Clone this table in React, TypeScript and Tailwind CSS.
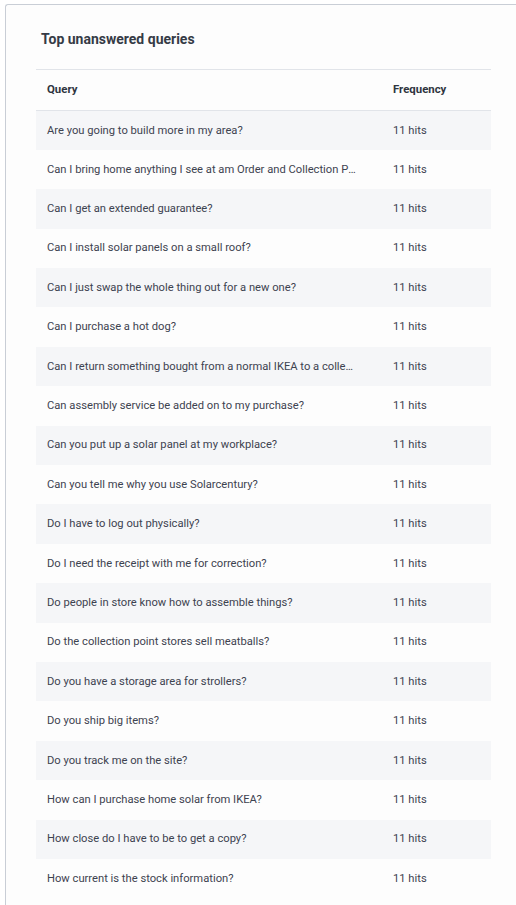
const queries = [
  'Are you going to build more in my area?',
  'Can I bring home anything I see at am Order and Collection Point?',
  'Can I get an extended guarantee?',
  'Can I install solar panels on a small roof?',
  'Can I just swap the whole thing out for a new one?',
  'Can I purchase a hot dog?',
  'Can I return something bought from a normal IKEA to a collection point?',
  'Can assembly service be added on to my purchase?',
  'Can you put up a solar panel at my workplace?',
  'Can you tell me why you use Solarcentury?',
  'Do I have to log out physically?',
  'Do I need the receipt with me for correction?',
  'Do people in store know how to assemble things?',
  'Do the collection point stores sell meatballs?',
  'Do you have a storage area for strollers?',
  'Do you ship big items?',
  'Do you track me on the site?',
  'How can I purchase home solar from IKEA?',
  'How close do I have to be to get a copy?',
  'How current is the stock information?',
];

export default function App() {
  return (
    <div className="h-[905px] overflow-hidden bg-white pt-[4px] pl-[5px] font-['Roboto',sans-serif]">
      <div className="h-[910px] rounded-tl-[3px] border-l border-t border-[#c9ced6] bg-[#fdfdfd] pl-[30px]">
        <h2 className="pl-[5px] pt-[24px] pb-[20px] text-[14px] font-bold leading-[20px] text-[#353b46]">
          Top unanswered queries
        </h2>
        <table className="w-[455px] table-fixed border-collapse text-[11.2px] text-[#3d4350]">
          <thead>
            <tr className="h-[41px] border-y border-[#e1e4e9]">
              <th className="w-[345px] pl-[11px] text-left text-[11.4px] font-bold text-[#2f3540]">Query</th>
              <th className="pl-[12px] text-left text-[11.4px] font-bold text-[#2f3540]">Frequency</th>
            </tr>
          </thead>
          <tbody>
            {queries.map((q, i) => (
              <tr key={q} className={i % 2 === 0 ? 'h-[39.4px] bg-[#f5f6f8]' : 'h-[39.4px]'}>
                <td className="truncate pl-[11px] pr-[24px] pt-[1px]">{q}</td>
                <td className="pl-[12px] pt-[1px]">11 hits</td>
              </tr>
            ))}
          </tbody>
        </table>
      </div>
    </div>
  );
}
